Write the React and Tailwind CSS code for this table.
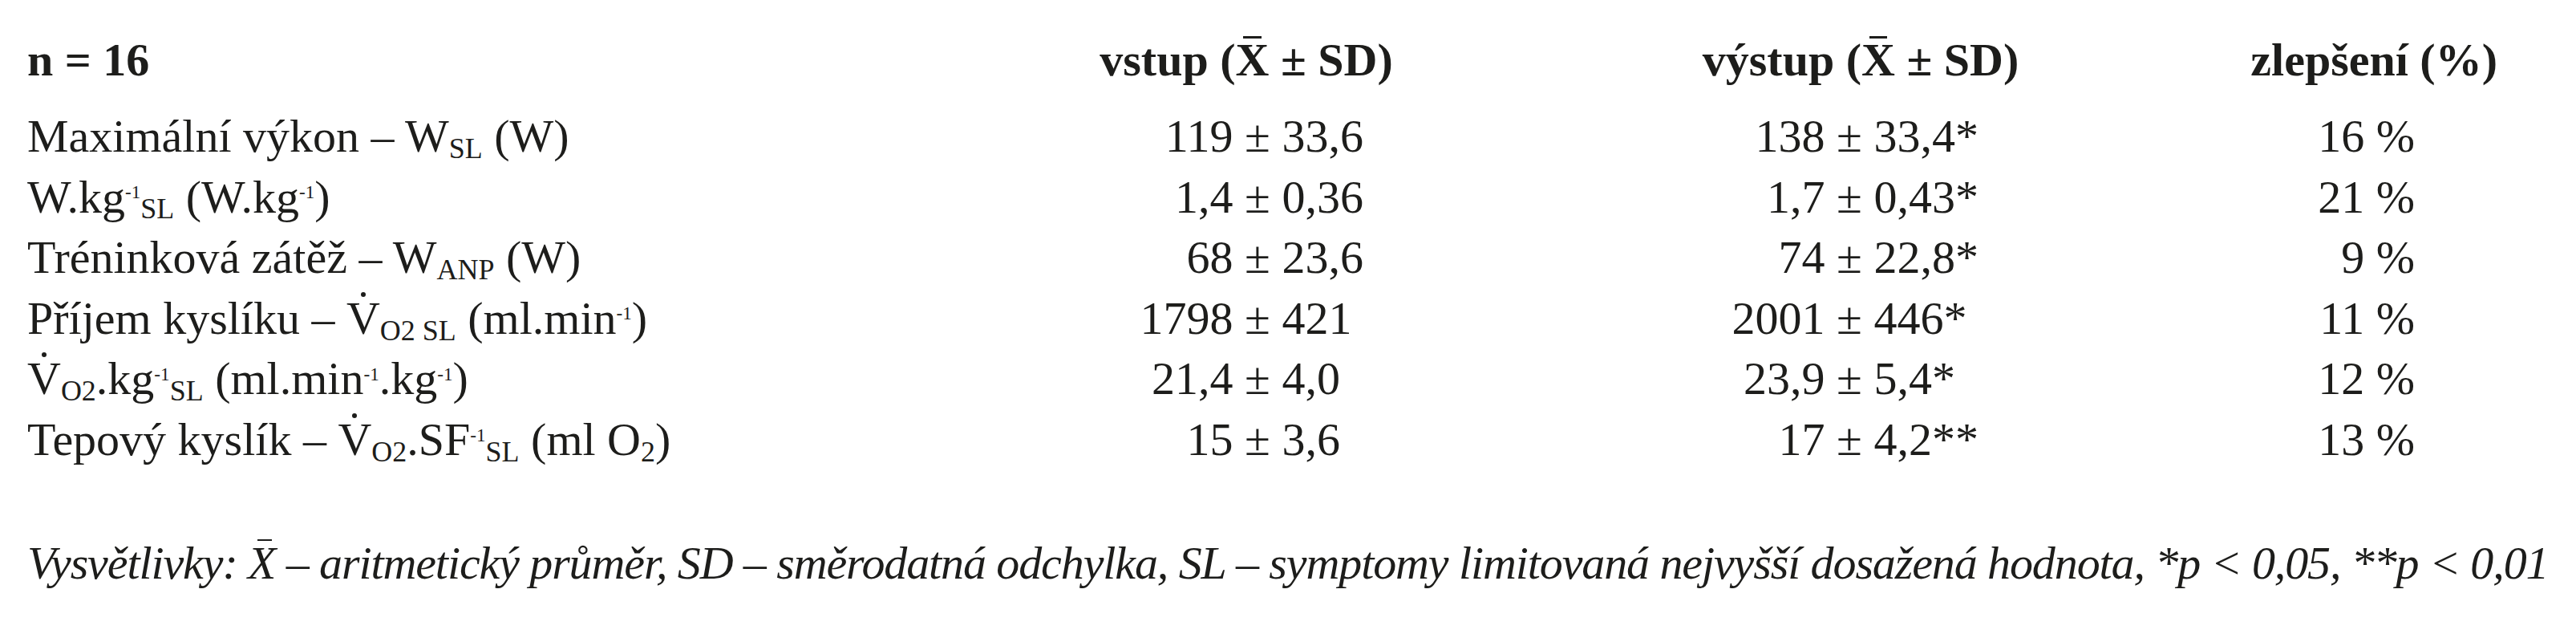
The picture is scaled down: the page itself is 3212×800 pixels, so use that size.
import React from 'react'

const rows = [
  { label: 'max', a: ['119', '33,6'], b: ['138', '33,4*'], c: '16 %' },
  { label: 'wkg', a: ['1,4', '0,36'], b: ['1,7', '0,43*'], c: '21 %' },
  { label: 'anp', a: ['68', '23,6'], b: ['74', '22,8*'], c: '9 %' },
  { label: 'vo2', a: ['1798', '421'], b: ['2001', '446*'], c: '11 %' },
  { label: 'vo2kg', a: ['21,4', '4,0'], b: ['23,9', '5,4*'], c: '12 %' },
  { label: 'tep', a: ['15', '3,6'], b: ['17', '4,2**'], c: '13 %' },
]

const Sub = ({ children }) => (
  <span className="relative top-[0.22em] text-[0.62em]">{children}</span>
)

const Sup = ({ children }) => (
  <span className="relative top-[-0.75em] text-[0.4em]">{children}</span>
)

// V with a dot above
const Vdot = () => (
  <span className="relative inline-block leading-none">
    V
    <span className="absolute left-1/2 top-[-4px] -translate-x-1/2 size-[6px] rounded-full bg-current" />
  </span>
)

// X with a bar above
const Xbar = ({ bold }) => (
  <span className="relative inline-block leading-none">
    X
    <span
      className={
        bold
          ? 'absolute left-[0.17em] right-[0.17em] top-[-1px] h-[3px] bg-current'
          : 'absolute left-[0.2em] right-[0.08em] top-[-1px] h-[2px] bg-current'
      }
    />
  </span>
)

const Label = ({ id }) => {
  if (id === 'max')
    return (
      <>
        Maximální výkon – W<Sub>SL</Sub> (W)
      </>
    )
  if (id === 'wkg')
    return (
      <>
        W.kg<Sup>-1</Sup>
        <Sub>SL</Sub> (W.kg<Sup>-1</Sup>)
      </>
    )
  if (id === 'anp')
    return (
      <>
        Tréninková zátěž – W<Sub>ANP</Sub> (W)
      </>
    )
  if (id === 'vo2')
    return (
      <>
        Příjem kyslíku – <Vdot />
        <Sub>O2 SL</Sub> (ml.min<Sup>-1</Sup>)
      </>
    )
  if (id === 'vo2kg')
    return (
      <>
        <Vdot />
        <Sub>O2</Sub>.kg<Sup>-1</Sup>
        <Sub>SL</Sub> (ml.min<Sup>-1</Sup>.kg<Sup>-1</Sup>)
      </>
    )
  return (
    <>
      Tepový kyslík – <Vdot />
      <Sub>O2</Sub>.SF<Sup>-1</Sup>
      <Sub>SL</Sub> (ml O<Sub>2</Sub>)
    </>
  )
}

const PlusMinus = ({ v }) => (
  <div className="grid grid-cols-[1fr_auto_1fr] whitespace-nowrap">
    <span className="text-right">{v[0]}</span>
    <span className="px-[0.25em]">±</span>
    <span className="text-left">{v[1]}</span>
  </div>
)

const App = () => {
  return (
    <div className="w-[3212px] h-[800px] bg-white pl-[34px] pt-[37px] font-['Liberation_Serif',serif] text-[58px] leading-[75.6px] text-[#1d1d1b]">
      <div className="grid grid-cols-[1304px_460px_738px_578px] mb-[19.4px] font-bold whitespace-nowrap">
        <div>n = 16</div>
        <div className="text-center pr-[28px]">
          vstup (<Xbar bold /> ± SD)
        </div>
        <div>
          <div className="ml-auto w-[460px] text-center pl-[28px]">
            výstup (<Xbar bold /> ± SD)
          </div>
        </div>
        <div className="text-right">zlepšení (%)</div>
      </div>

      {rows.map((r) => (
        <div key={r.label} className="grid grid-cols-[1304px_460px_738px_578px] h-[75.6px]">
          <div className="whitespace-nowrap">
            <Label id={r.label} />
          </div>
          <PlusMinus v={r.a} />
          <div>
            <div className="ml-auto w-[460px]">
              <PlusMinus v={r.b} />
            </div>
          </div>
          <div className="text-right pr-[103px]">{r.c}</div>
        </div>
      ))}

      <div className="mt-[78px] italic whitespace-nowrap tracking-[-1.1px]">
        Vysvětlivky: <Xbar /> – aritmetický průměr, SD – směrodatná odchylka, SL – symptomy limitovaná nejvyšší
        dosažená hodnota, *p &lt; 0,05, **p &lt; 0,01
      </div>
    </div>
  )
}

export default App
